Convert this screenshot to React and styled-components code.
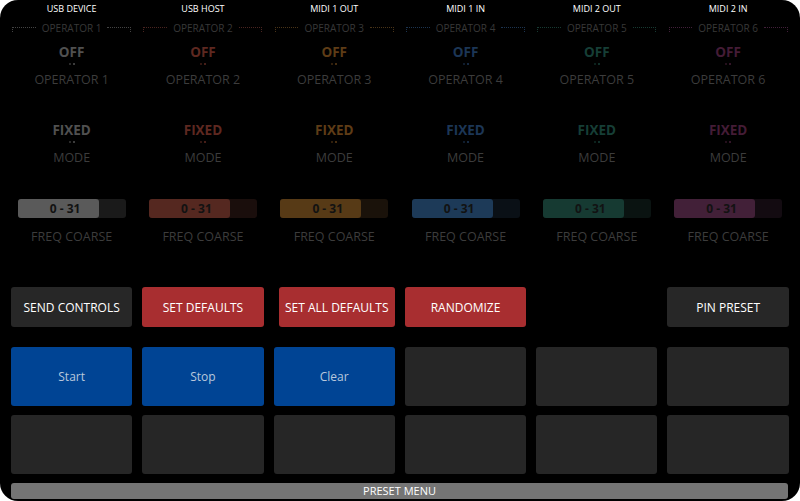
import React from "react";
import styled, { createGlobalStyle } from "styled-components";

const G = createGlobalStyle`
  html,body{margin:0;padding:0;background:#fff;}
  body{font-family:"Open Sans","DejaVu Sans",sans-serif;}
`;
const Frame = styled.div`
  width:800px;height:501px;background:#000;border-radius:18px;overflow:hidden;
  box-sizing:border-box;padding:0 6px 2px 6px;display:flex;flex-direction:column;
`;
const Grid = styled.div`display:grid;grid-template-columns:repeat(6,131.3px);`;
const Col = styled.div`display:flex;flex-direction:column;align-items:center;`;
const Head = styled.div`color:#fff;font-size:9px;height:17px;line-height:17px;`;
const Bracket = styled.div`
  display:flex;align-items:flex-start;width:119px;height:14px;margin-top:4px;
`;
const Seg = styled.div`
  flex:1;height:4px;margin-top:6px;border-top:1px dotted ${p=>p.c};
  ${p=>p.left?`border-left:1px dotted ${p.c};`:`border-right:1px dotted ${p.c};`}
`;
const OpT = styled.div`color:#383838;font-size:10px;line-height:14px;padding:0 6px;`;
const Big = styled.div`color:${p=>p.c};font-weight:bold;font-size:13.5px;line-height:16px;margin-top:${p=>p.mt}px;`;
const Dots = styled.div`display:flex;gap:2px;height:5px;align-items:center;margin-top:1px;
  span{width:2px;height:2px;border-radius:1px;background:${p=>p.c};}
  span:first-child{opacity:.7}`;
const Lbl = styled.div`color:#3c3c3c;font-size:12.5px;line-height:16px;margin-top:${p=>p.mt||6}px;`;
const Slider = styled.div`
  width:108px;height:19px;border-radius:3px;background:${p=>p.bg};margin-top:33px;position:relative;
  display:flex;
`;
const Fill = styled.div`width:81px;height:100%;border-radius:3px;background:${p=>p.c};`;
const SlTxt = styled.div`position:absolute;left:0;width:81px;top:0;line-height:19px;text-align:center;
  font-weight:bold;font-size:12px;color:#121212;padding-left:14px;box-sizing:border-box;`;
const Btns = styled.div`display:grid;grid-template-columns:repeat(6,131.3px);margin-top:42px;`;
const Btn = styled.div`
  margin:0 5px 0 ${p=>p.ml||5}px;height:40px;border-radius:3px;background:${p=>p.bg||"#272727"};
  color:#fff;font-size:12px;display:flex;align-items:center;justify-content:center;white-space:nowrap;
  visibility:${p=>p.hide?"hidden":"visible"};
`;
const Pads = styled.div`display:grid;grid-template-columns:repeat(6,131.3px);row-gap:9px;margin-top:20px;`;
const Pad = styled.div`
  margin:0 5px;height:59px;border-radius:3px;background:${p=>p.blue?"#004494":"#262626"};
  color:#b8c8dc;font-size:12px;display:flex;align-items:center;justify-content:center;
`;
const Preset = styled.div`
  margin:9px 6px 0 5px;height:16px;border-radius:3px;background:#757575;color:#fff;
  font-size:11px;line-height:16px;text-align:center;
`;

const cols = [
  ["USB DEVICE","#505050","#5a5a5a","#1a1a1a","#444"],
  ["USB HOST","#5e2820","#552820","#1a0e0c","#4a2420"],
  ["MIDI 1 OUT","#5e3c16","#573a16","#1a120a","#4a3418"],
  ["MIDI 1 IN","#1c3656","#1d3a58","#0a1016","#1c3450"],
  ["MIDI 2 OUT","#163e36","#163a32","#0a1311","#173a32"],
  ["MIDI 2 IN","#441c36","#422038","#130b11","#42203a"],
];

export default function App(){
  return (<><G/><Frame>
    <Grid>{cols.map(([h,c,f,bg,br],i)=>(
      <Col key={i}>
        <Head>{h}</Head>
        <Bracket><Seg left c={br}/><OpT>OPERATOR {i+1}</OpT><Seg c={br}/></Bracket>
        <Big c={c} mt={9}>OFF</Big>
        <Dots c={c}><span/><span/></Dots>
        <Lbl>OPERATOR {i+1}</Lbl>
        <Big c={c} mt={34}>FIXED</Big>
        <Dots c={c}><span/><span/></Dots>
        <Lbl>MODE</Lbl>
        <Slider bg={bg}><Fill c={f}/><SlTxt>0 - 31</SlTxt></Slider>
        <Lbl mt={11}>FREQ COARSE</Lbl>
      </Col>))}
    </Grid>
    <Btns>
      <Btn>SEND CONTROLS</Btn>
      <Btn bg="#a82e30">SET DEFAULTS</Btn>
      <Btn bg="#a82e30" ml={10}>SET ALL DEFAULTS</Btn>
      <Btn bg="#a82e30">RANDOMIZE</Btn>
      <Btn hide/>
      <Btn>PIN PRESET</Btn>
    </Btns>
    <Pads>
      <Pad blue>Start</Pad><Pad blue>Stop</Pad><Pad blue>Clear</Pad><Pad/><Pad/><Pad/>
      <Pad/><Pad/><Pad/><Pad/><Pad/><Pad/>
    </Pads>
    <Preset>PRESET MENU</Preset>
  </Frame></>);
}
